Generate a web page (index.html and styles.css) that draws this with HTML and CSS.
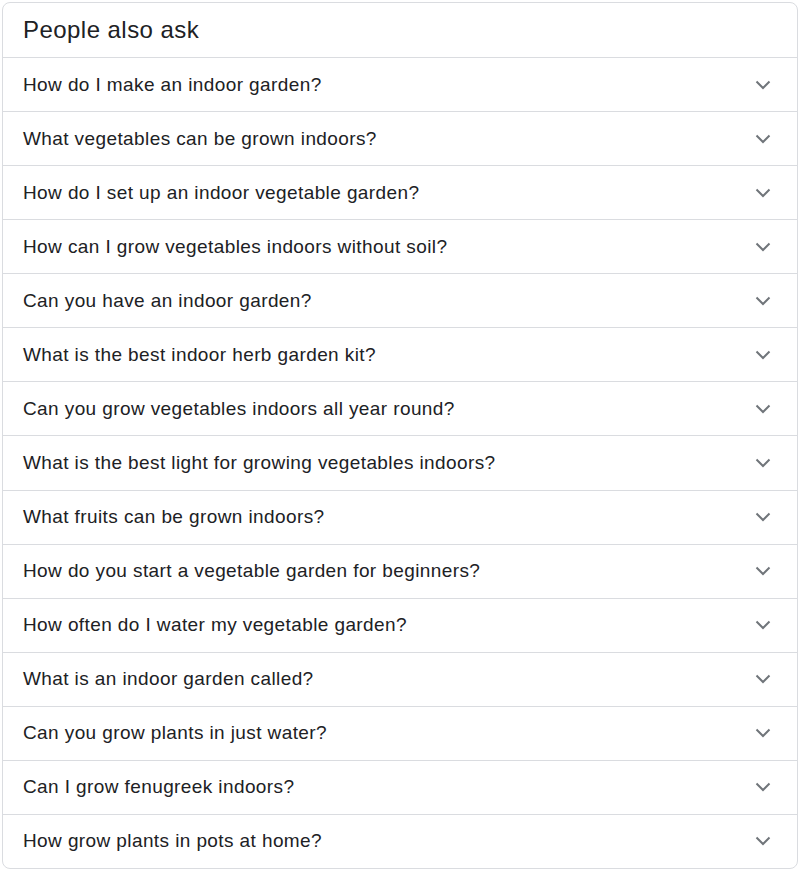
FILE: index.html
```html
<!DOCTYPE html>
<html>
<head>
<meta charset="utf-8">
<link rel="stylesheet" href="styles.css">
</head>
<body>
<div class="card">
  <div class="header">People also ask</div>
  <div class="row"><span class="q">How do I make an indoor garden?</span><svg class="chev" viewBox="0 0 16 10"><polyline points="1.5,1.5 8,8 14.5,1.5"/></svg></div>
  <div class="row"><span class="q">What vegetables can be grown indoors?</span><svg class="chev" viewBox="0 0 16 10"><polyline points="1.5,1.5 8,8 14.5,1.5"/></svg></div>
  <div class="row"><span class="q">How do I set up an indoor vegetable garden?</span><svg class="chev" viewBox="0 0 16 10"><polyline points="1.5,1.5 8,8 14.5,1.5"/></svg></div>
  <div class="row"><span class="q">How can I grow vegetables indoors without soil?</span><svg class="chev" viewBox="0 0 16 10"><polyline points="1.5,1.5 8,8 14.5,1.5"/></svg></div>
  <div class="row"><span class="q">Can you have an indoor garden?</span><svg class="chev" viewBox="0 0 16 10"><polyline points="1.5,1.5 8,8 14.5,1.5"/></svg></div>
  <div class="row"><span class="q">What is the best indoor herb garden kit?</span><svg class="chev" viewBox="0 0 16 10"><polyline points="1.5,1.5 8,8 14.5,1.5"/></svg></div>
  <div class="row"><span class="q">Can you grow vegetables indoors all year round?</span><svg class="chev" viewBox="0 0 16 10"><polyline points="1.5,1.5 8,8 14.5,1.5"/></svg></div>
  <div class="row"><span class="q">What is the best light for growing vegetables indoors?</span><svg class="chev" viewBox="0 0 16 10"><polyline points="1.5,1.5 8,8 14.5,1.5"/></svg></div>
  <div class="row"><span class="q">What fruits can be grown indoors?</span><svg class="chev" viewBox="0 0 16 10"><polyline points="1.5,1.5 8,8 14.5,1.5"/></svg></div>
  <div class="row"><span class="q">How do you start a vegetable garden for beginners?</span><svg class="chev" viewBox="0 0 16 10"><polyline points="1.5,1.5 8,8 14.5,1.5"/></svg></div>
  <div class="row"><span class="q">How often do I water my vegetable garden?</span><svg class="chev" viewBox="0 0 16 10"><polyline points="1.5,1.5 8,8 14.5,1.5"/></svg></div>
  <div class="row"><span class="q">What is an indoor garden called?</span><svg class="chev" viewBox="0 0 16 10"><polyline points="1.5,1.5 8,8 14.5,1.5"/></svg></div>
  <div class="row"><span class="q">Can you grow plants in just water?</span><svg class="chev" viewBox="0 0 16 10"><polyline points="1.5,1.5 8,8 14.5,1.5"/></svg></div>
  <div class="row"><span class="q">Can I grow fenugreek indoors?</span><svg class="chev" viewBox="0 0 16 10"><polyline points="1.5,1.5 8,8 14.5,1.5"/></svg></div>
  <div class="row"><span class="q">How grow plants in pots at home?</span><svg class="chev" viewBox="0 0 16 10"><polyline points="1.5,1.5 8,8 14.5,1.5"/></svg></div>
</div>
</body>
</html>
```
FILE: styles.css
```css
html, body {
  margin: 0;
  padding: 0;
  background: #ffffff;
}
body {
  padding: 2px;
  font-family: "Liberation Sans", Arial, sans-serif;
  color: #202124;
}
.card {
  width: 794px;
  border: 1px solid #dadce0;
  border-radius: 8px;
  overflow: hidden;
}
.header {
  height: 54px;
  display: flex;
  align-items: center;
  padding-left: 20px;
  font-size: 24px;
  letter-spacing: 0.45px;
  line-height: 28px;
}
.row {
  height: 53.07px;
  border-top: 1px solid #dadce0;
  display: flex;
  align-items: center;
  justify-content: space-between;
  padding: 0 26px 0 20px;
  font-size: 19px;
  letter-spacing: 0.4px;
  line-height: 24px;
}
.chev {
  width: 16px;
  height: 10px;
  fill: none;
  stroke: #70757a;
  stroke-width: 2;
}
```
